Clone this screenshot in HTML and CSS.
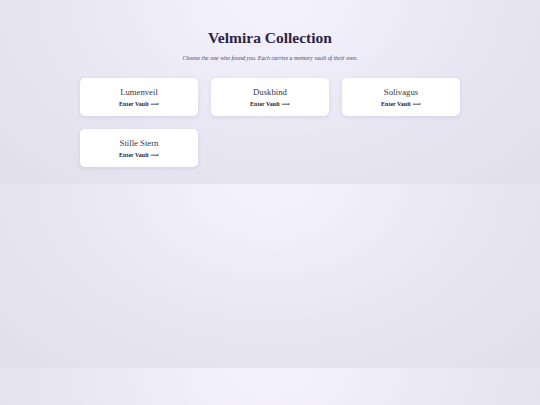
FILE: index.html
```html
<!DOCTYPE html>
<html lang="en">
<head>
<meta charset="utf-8">
<title>Velmira Collection</title>
<link rel="stylesheet" href="styles.css">
</head>
<body>
<main class="page">
  <h1 class="title">Velmira Collection</h1>
  <p class="subtitle">Choose the one who found you. Each carries a memory vault of their own.</p>
  <div class="grid">
    <a class="card" href="#"><span class="name">Lumenveil</span><span class="enter">Enter Vault ⟶</span></a>
    <a class="card" href="#"><span class="name">Duskbind</span><span class="enter">Enter Vault ⟶</span></a>
    <a class="card" href="#"><span class="name">Solivagus</span><span class="enter">Enter Vault ⟶</span></a>
    <a class="card" href="#"><span class="name">Stille Stern</span><span class="enter">Enter Vault ⟶</span></a>
  </div>
</main>
</body>
</html>
```
FILE: styles.css
```css
body {
  margin: 0;
  font-family: "Liberation Serif", "DejaVu Serif", serif;
  color: #2a2438;
  background: radial-gradient(ellipse at top, #f5f3fe 0%, #e9e6f4 55%, #e2dfec 100%);
}
.page {
  padding: 27px 0 17px;
  display: flex;
  flex-direction: column;
  align-items: center;
}
.title {
  margin: 0;
  font-size: 15.5px;
  font-weight: bold;
  line-height: 22px;
  color: #2b2540;
}
.subtitle {
  margin: 4px 0 15px;
  font-size: 5.9px;
  font-style: italic;
  line-height: 10px;
  color: #4a4458;
}
.grid {
  width: 380px;
  display: grid;
  grid-template-columns: repeat(3, 1fr);
  gap: 13px;
}
.card {
  height: 38px;
  background: #ffffff;
  border-radius: 5px;
  box-shadow: 0 1px 4px rgba(60, 50, 100, 0.12);
  display: flex;
  flex-direction: column;
  align-items: center;
  justify-content: center;
  text-decoration: none;
  color: #2a2438;
}
.name {
  font-size: 8.7px;
  line-height: 12px;
  color: #3a3448;
}
.enter {
  margin-top: 2px;
  font-size: 6px;
  font-weight: bold;
  line-height: 9px;
  color: #2a2438;
}
```
